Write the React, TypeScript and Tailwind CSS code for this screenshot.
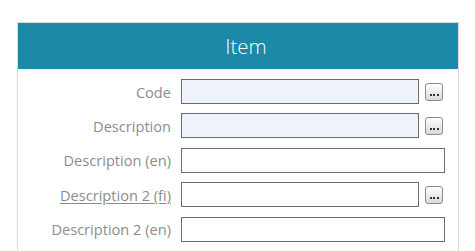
import React from 'react';

const rows = [
  { label: 'Code', tinted: true, lookup: true },
  { label: 'Description', tinted: true, lookup: true },
  { label: 'Description (en)', tinted: false, lookup: false },
  { label: 'Description 2 (fi)', tinted: false, lookup: true, link: true },
  { label: 'Description 2 (en)', tinted: false, lookup: false },
];

function LookupButton() {
  return (
    <button className="ml-[6px] flex h-[18px] w-[18px] items-end justify-center rounded-[3px] border border-[#8c8c8c] bg-gradient-to-b from-white to-[#d9d9d9] pb-[4px]">
      <span className="flex gap-[1.5px]">
        <span className="h-[2px] w-[2px] bg-[#333]" />
        <span className="h-[2px] w-[2px] bg-[#333]" />
        <span className="h-[2px] w-[2px] bg-[#333]" />
      </span>
    </button>
  );
}

export default function App() {
  return (
    <div className="h-[251px] w-[475px] overflow-hidden bg-white pt-[22px] pl-[17px]" style={{ fontFamily: '"Open Sans", "Noto Sans", sans-serif' }}>
      <div className="h-[300px] w-[442px] border border-[#dadada]">
        <div className="flex h-[46px] items-center justify-center bg-[#1c89a8] pl-[16px] text-[20.5px] font-light text-white">
          Item
        </div>
        <div className="flex flex-col gap-[9.4px] pt-[10px]">
          {rows.map((r) => (
            <div key={r.label} className="flex h-[25px] items-center">
              <div className="w-[153px] pt-[2px] text-right text-[14.6px] text-[#8c8c8c]">
                <span className={r.link ? 'underline underline-offset-2' : ''}>{r.label}</span>
              </div>
              <input
                className={`ml-[10px] h-[25px] border border-[#6b6b6b] outline-none ${r.lookup ? 'w-[238px]' : 'w-[264px]'} ${r.tinted ? 'bg-[#eef3fb]' : 'bg-white'}`}
              />
              {r.lookup && <LookupButton />}
            </div>
          ))}
        </div>
      </div>
    </div>
  );
}
